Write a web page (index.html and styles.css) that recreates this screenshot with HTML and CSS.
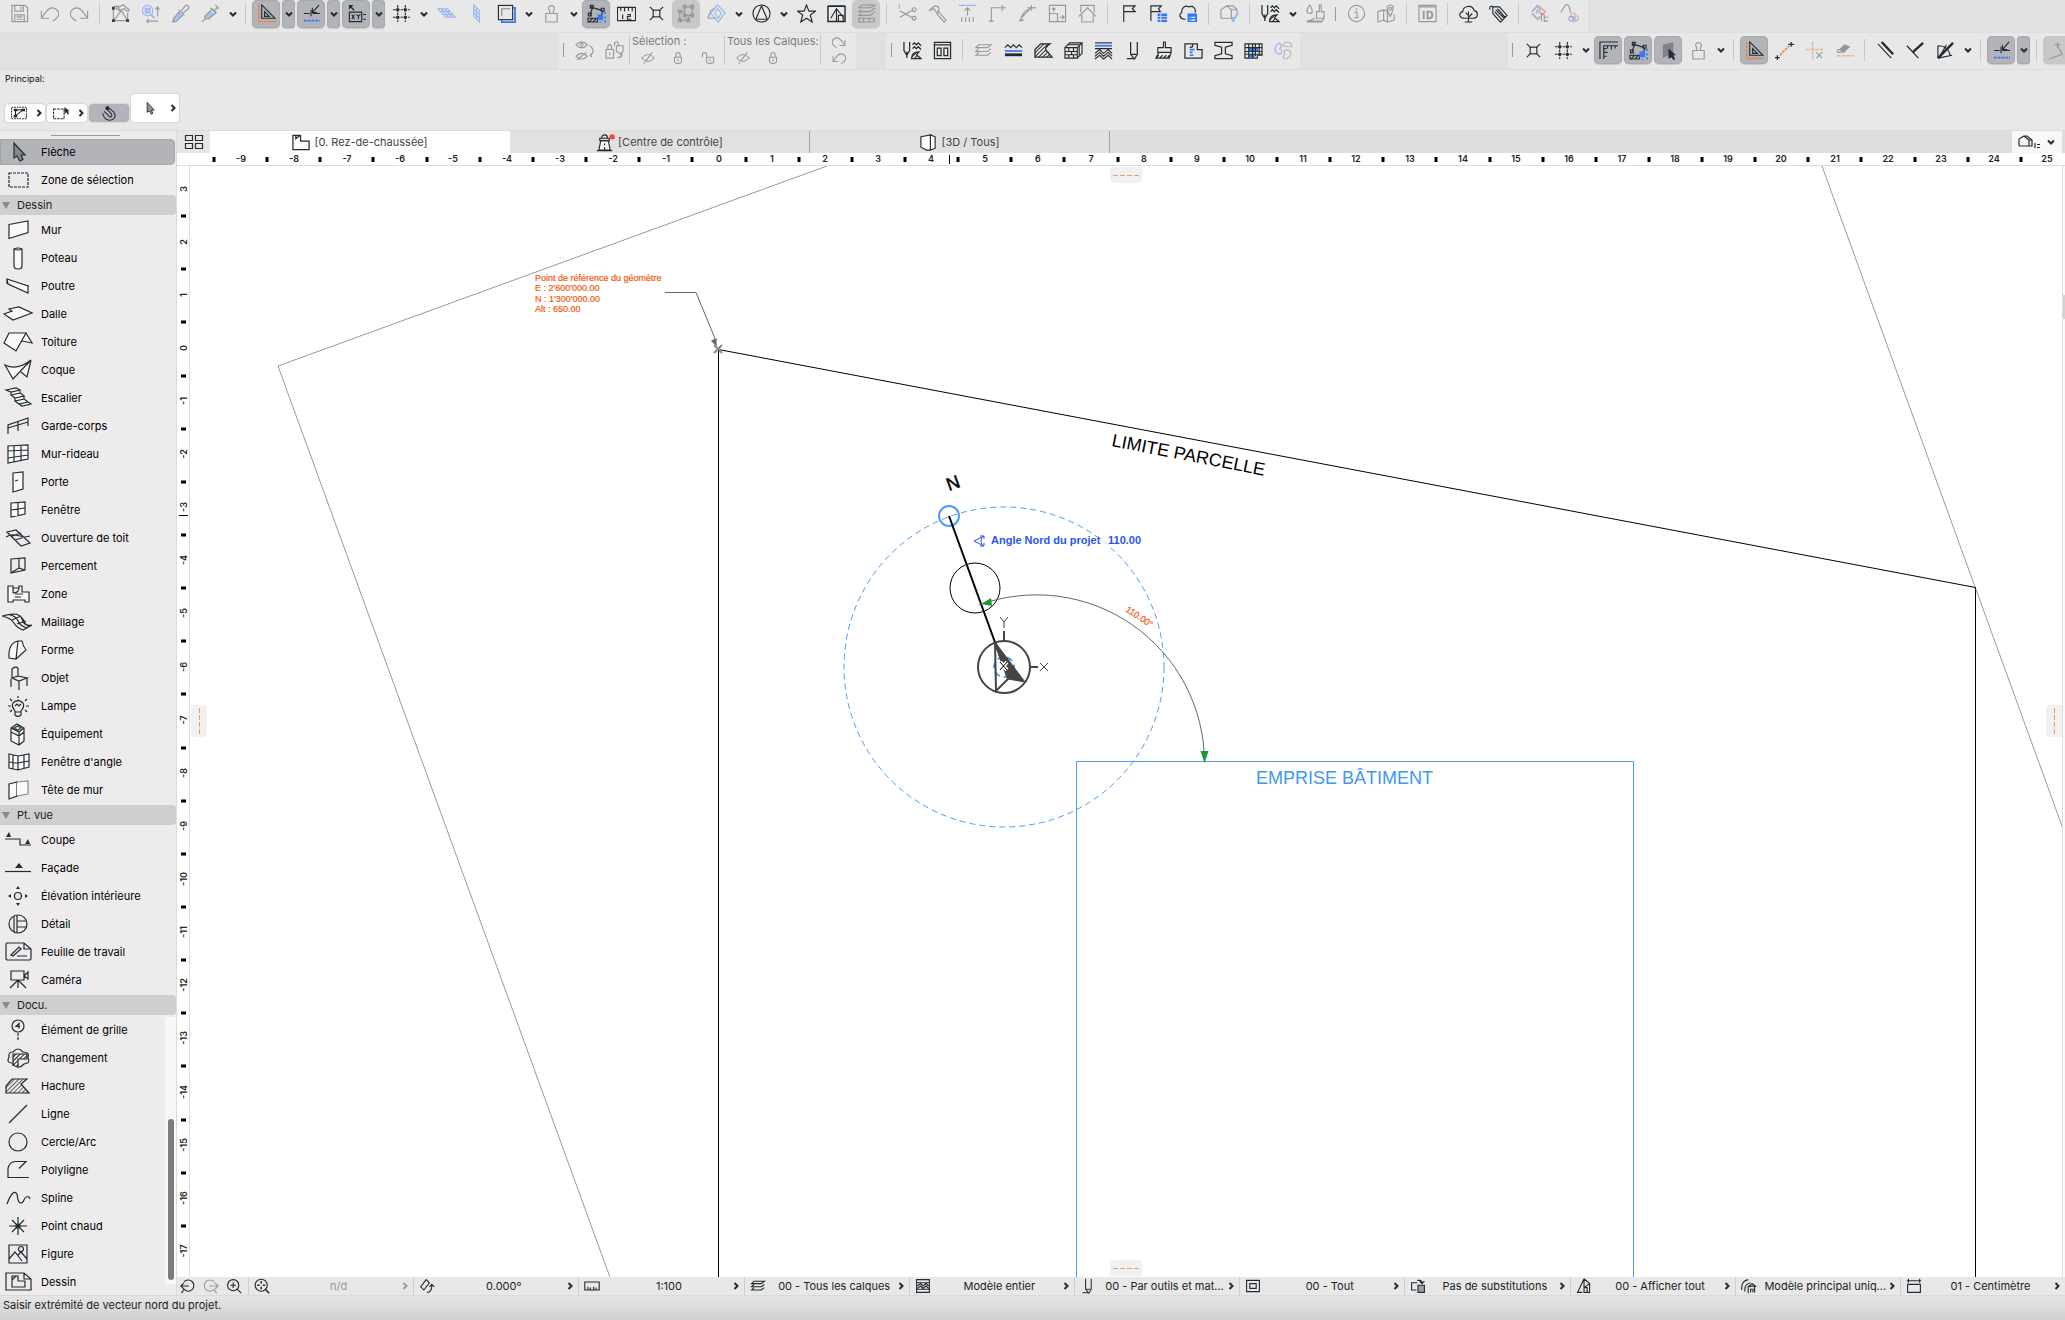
FILE: index.html
```html
<!DOCTYPE html>
<html lang="fr">
<head>
<meta charset="utf-8">
<title>Rez-de-chaussée</title>
<link rel="stylesheet" href="styles.css">
</head>
<body>
<svg class="defs" aria-hidden="true">
  <defs>
    <pattern id="hatch" width="3" height="3" patternUnits="userSpaceOnUse" patternTransform="rotate(45)"><path d="M0 0V3" stroke="#222c32" stroke-width="2"/></pattern>
    <symbol id="chev-d" viewBox="0 0 10 10"><path d="M2 3.500l3 3 3-3" stroke-width="2"/></symbol>
    <symbol id="chev-r" viewBox="0 0 10 10"><path d="M3.500 2l3 3-3 3" stroke-width="2"/></symbol>
    <symbol id="save" viewBox="0 0 20 20"><path d="M2 1.500h14l2.500 2.500v14.500h-16.500zM5 1.500v6h9v-6M11.500 3v3M5 18.500v-7h10v7M7 13.500h6M7 16h6"/></symbol>
    <symbol id="undo" viewBox="0 0 20 20"><path d="M1.500 7v8h8M1.500 15l5-7c4-5 9-5 12-1s0 8-5 11"/></symbol>
    <symbol id="redo" viewBox="0 0 20 20"><path d="M18.500 7v8h-8M18.500 15l-5-7c-4-5-9-5-12-1s0 8 5 11"/></symbol>
    <symbol id="transform" viewBox="0 0 20 20"><path d="M2.500 5v12.500h15v-8M3 17l8-10M3 2.500h4l-2 3M8 3l5-2 6 5-1 2-4-3-5 2zM11 7l6 10M5 4l4 3"/><path class="solid" d="M1 3h3v3h-3zM1 16h3v3h-3zM16 16h3v3h-3z"/></symbol>
    <symbol id="findsel" viewBox="0 0 20 20"><g class="blue"><circle cx="7" cy="7" r="5.500"/><path d="M11 11l3 4" stroke-width="2"/><path class="fillblue" d="M4.500 4.500h5v5h-5z"/></g><path d="M17.500 13V4M15 6l2.500-3 2 3M6 18h12M8 16l-2 2 2 2"/></symbol>
    <symbol id="pick" viewBox="0 0 20 20"><path class="fillblue blue" d="M3 15l6-6 3 3-6 6-4 1z"/><path d="M8 6l6 6M10 8l5-6c2-2 5 1 3 3l-6 5M9 8l-6 7-1 4 4-1 7-7"/></symbol>
    <symbol id="inject" viewBox="0 0 20 20"><path class="fillblue blue" d="M5 13l5-5 3 3-5 4z"/><path d="M1 19l4-4M4 13l8-8 4 4-8 7-4-1zM14 7l4-4M15 1l4 4M10 4l6 6"/></symbol>
    <symbol id="guide" viewBox="0 0 20 20"><path d="M5 1v14h14zM8 8v5h5z"/><path class="orange" d="M2 1v17M2 18.500h18" stroke-dasharray="3 1"/></symbol>
    <symbol id="snap" viewBox="0 0 20 20"><path d="M2 10h6M9.500 6v7M11 10h8M11 9l7-8M11 4v5h5"/><path class="bluebright" d="M2 17.500h17" stroke-dasharray="3 1"/></symbol>
    <symbol id="tracker" viewBox="0 0 20 20"><path d="M2.500 8.500h13v10h-13zM17 11h3M17 16h3M5 11l3 5M8 11l-3 5M10 11l2 2 2-2M12 13v3"/><path class="solid" d="M2 1h5l-2 2 3 3-1 1-3-3-2 2z"/></symbol>
    <symbol id="grid" viewBox="0 0 20 20"><path d="M6 1v18M14 1v18M1 6h18M1 14h18" stroke-dasharray="3 1"/><path class="solid" d="M4.500 4.500h3v3h-3zM12.500 4.500h3v3h-3zM4.500 12.500h3v3h-3zM12.500 12.500h3v3h-3z"/></symbol>
    <symbol id="plane-h" viewBox="0 0 20 20"><path class="blue" d="M1 5h10l8 9h-10zM4 8h10M6 11h11M4.500 5l8 9M8 5l8 9"/></symbol>
    <symbol id="plane-v" viewBox="0 0 20 20"><path class="blue" d="M7 1l6 6v12l-6-6zM10 4v12M7 5l6 6M7 9l6 6"/></symbol>
    <symbol id="layers2" viewBox="0 0 20 20"><path class="bluebright" d="M17 4h2v15h-14v-2"/><rect x="1.500" y="1.500" width="15" height="15"/><path d="M5 13v-8h9" stroke-opacity=".5"/></symbol>
    <symbol id="weight" viewBox="0 0 20 20"><path d="M4 10h12v9h-12zM8 10v-3c-5-7 9-7 4 0v3"/></symbol>
    <symbol id="suspend" viewBox="0 0 20 20"><path d="M4 3l12 4M3 11l3-7M17 7l-2 5M1.500 9.500h3v3h-3zM3.500 1.500h3v3h-3zM15 4.500h3v3h-3z"/><path d="M1 15h10v4h-10zM2 19l4-4M6 19l4-4"/><path class="fillbright" d="M11 11h6v6h-6z"/><path class="bluebright" d="M18 10l2-1M18 14h2M18 18l2 1M14 19v1"/></symbol>
    <symbol id="measure" viewBox="0 0 20 20"><path d="M0.500 3.500h19v14h-19zM4 4v3M8 4v4M12 4v3M16 4v4M6 11v5M11 11h3v2h-3v3h4"/></symbol>
    <symbol id="hot" viewBox="0 0 20 20"><rect x="6.500" y="6.500" width="7" height="7"/><path d="M3 3l4 4M17 3l-4 4M3 17l4-4M17 17l-4-4"/></symbol>
    <symbol id="group" viewBox="0 0 20 20"><path d="M8 3h8v9h-8zM3 8h5M3 8v9h9v-5M6.500 1.500h3v3h-3zM14.500 1.500h3v3h-3zM6.500 10.500h3v3h-3zM14.500 10.500h3v3h-3zM1.500 6.500h3v3h-3zM1.500 15.500h3v3h-3zM10.500 15.500h3v3h-3z"/></symbol>
    <symbol id="plane-e" viewBox="0 0 20 20"><path d="M1 15l3-8 5-3M1 15h9"/><path class="blue" d="M11 1l8 8-7 10-8-9zM11 5l4 4-3 6-4-5z"/></symbol>
    <symbol id="circtri" viewBox="0 0 20 20"><circle cx="10" cy="10" r="9"/><path d="M10 2l-6 14h12z"/></symbol>
    <symbol id="star" viewBox="0 0 20 20"><path d="M10 1l2.500 6.500h7l-5.500 4 2 7.500-6-4-6 4 2-7.500-5.500-4h7z"/></symbol>
    <symbol id="house-f" viewBox="0 0 20 20"><path d="M1 2.500h18v16h-18zM1 2h18" stroke-width="1.500"/><path d="M4 15l6-10 8 10M10 5v13M12 18v-6h5v6"/></symbol>
    <symbol id="stack" viewBox="0 0 20 20"><path d="M5 1h14l-5 3h-12zM19 4l-5 4h-12l2-2M19 8l-5 4h-12l2-2M2 15h16v4h-16zM7 15v4M13 15v4"/></symbol>
    <symbol id="scissors" viewBox="0 0 20 20"><path d="M2 7l14 8M2 14l14-8"/><circle cx="17" cy="6" r="2"/><circle cx="17" cy="15" r="2"/><path class="blue" d="M1.500 0v5"/></symbol>
    <symbol id="axe" viewBox="0 0 20 20"><path d="M1 7l6-5c5 0 6 4 3 8l-4-5zM10 7l9 10-2 2-8-9"/></symbol>
    <symbol id="adjust" viewBox="0 0 20 20"><path class="blue" d="M1 1.500h18"/><path d="M10 12v-8M7 7l3-3 3 3M4 14v5M8 14v5M12 14v5M16 14v5"/></symbol>
    <symbol id="inter" viewBox="0 0 20 20"><path d="M3.500 19v-15h12M15 1v6M12 4h7M1 18h5"/></symbol>
    <symbol id="fillet" viewBox="0 0 20 20"><path d="M3 19c0-8 5-14 14-15M14 1v6M10 4h9M1 17h5M3 15l9-9"/></symbol>
    <symbol id="resize" viewBox="0 0 20 20"><path d="M1.500 10v-8.500h17v17h-8.500M1.500 10h8.500v8.500h-8.500zM6 8v-4M4 6l2-2 2 2M12 14h5M15 12l2 2-2 2"/></symbol>
    <symbol id="explode" viewBox="0 0 20 20"><path d="M3 9v-7.500h14v7.500M1 13l9-9 9 9M4 11v8h12v-8"/></symbol>
    <symbol id="flag" viewBox="0 0 20 20"><path d="M5 19V2h12l-3 3 3 3H5"/></symbol>
    <symbol id="flagl" viewBox="0 0 20 20"><path d="M2 18V2h11l-3 3 2 3H2"/><path class="fillbright" d="M9 10h3v2.500h-3zM13 10h6v2.500h-6zM9 13.500h3v2h-3zM13 13.500h6v2h-6zM9 16.500h3v2.500h-3zM13 16.500h6v2.500h-6z"/></symbol>
    <symbol id="cloudl" viewBox="0 0 20 20"><path d="M7 16h-2c-5-1-5-6-2-7-1-5 4-8 7-6 5-2 8 2 7 6"/><path class="fillbright" d="M9 10h10v9h-10z"/><path d="M11 14h1M13 14h4M11 17h1M13 17h4" stroke="#fff"/></symbol>
    <symbol id="check3d" viewBox="0 0 20 20"><path d="M1 6l6-4 5 4v9h-11zM7 2l7 0 4 4v3M12 6h6M12 15l3-1"/><path class="blue" d="M12 15l2 3 5-9" stroke-width="2"/></symbol>
    <symbol id="brushset" viewBox="0 0 20 20"><path d="M1 1v9l3 5 3-5v-9M4 11v7M10 4l2-2 2 2 2-2 3 3M10 8l2-2 2 2 2-2 3 3" stroke-width="1.300"/><path d="M9 18.500c0-5 3-7 8-7l-3 3 5 4z" fill="url(#hatch)"/></symbol>
    <symbol id="paint" viewBox="0 0 20 20"><path d="M4 1c-5 7-3 9 0 9s4-3 0-9M14 1h2v7h3v7h-8v-7h3zM9 15c-2 1-4 3-8 3h16l2-3M1 19h16"/></symbol>
    <symbol id="info" viewBox="0 0 20 20"><circle cx="10" cy="10" r="8.500"/><path d="M8 8.500h2.500v6M7.500 14.500h5M10 4.500v2"/></symbol>
    <symbol id="map" viewBox="0 0 20 20"><path d="M1 8l6-2v11l-6 2zM7 6l4 2v11l-4-2M11 19l7-2v-6M14 13c-5-8-4-12 0-12s4 4 0 12z"/><circle cx="14" cy="5" r="1.500"/></symbol>
    <symbol id="idbox" viewBox="0 0 20 20"><path d="M1 1.500h18v17h-18zM1 3h18"/><path d="M6 7v9M10 8v7h2c4 0 4-7 0-7z" stroke-width="2"/></symbol>
    <symbol id="tree" viewBox="0 0 20 20"><path d="M10 19v-11M6 19h8M10 14l4-4M10 12l-3-3M10 15h-4c-6 0-7-6-2-7 0-6 10-8 12-1 5 1 4 8-1 8h-5"/></symbol>
    <symbol id="tag" viewBox="0 0 20 20"><path d="M4 3l7 0 8 9-7 7-8-9zM7 6l9 9M9 5l8 9M6 8l8 9M1 6c-1-4 2-5 4-2"/></symbol>
    <symbol id="knot" viewBox="0 0 20 20"><g stroke-width="2" opacity=".55"><path d="M2 8l6-6 3 3-5 5" stroke="#6874c8"/><path d="M9 2l7 6-3 3-6-5" stroke="#f07070"/><path d="M2 10l6 6 3-3" stroke="#b060b0"/><path d="M6 10l5-4" stroke="#68b8b8"/></g><path d="M12 9v9M12 11h3M15 11v8M15 14h4M15 18h4"/></symbol>
    <symbol id="knotc" viewBox="0 0 20 20"><path d="M1 9c5-10 7-10 9-5l1 5"/><g opacity=".6"><circle cx="14" cy="12" r="2.500" stroke="#f07070"/><circle cx="17" cy="15" r="2.500" stroke="#68b8b8"/><circle cx="12" cy="15.500" r="2.500" stroke="#6874c8"/><circle cx="15" cy="17" r="2" stroke="#f07070"/></g></symbol>
    <symbol id="eye2" viewBox="0 0 20 20"><path d="M1 4q6-6 12 0q-6 6-12 0zM1 16q6-6 12 0q-6 6-12 0zM2 20l10-8M15 5c5 2 5 8 1 10M18 13l-2 2 2 2"/><circle cx="7" cy="4" r="1.500"/></symbol>
    <symbol id="lock2" viewBox="0 0 20 20"><path d="M1 9h8v9h-8zM3 9v-3c0-3 4-3 4 0v3M5 12v3M12 5h7v6q-3 4-7 0zM10 5v-2c0-3 4-3 4 0v2M13 17c4 1 5-1 5-3M16 15l2-2"/></symbol>
    <symbol id="eyeoff" viewBox="0 0 20 20"><path d="M1 10q9-10 18 0q-9 10-18 0zM4 18L16 2"/></symbol>
    <symbol id="lock" viewBox="0 0 20 20"><path d="M5 9h10v7q-5 4-10 0zM7 9v-4c0-4 6-4 6 0v4M10 11v4"/></symbol>
    <symbol id="unlock" viewBox="0 0 20 20"><path d="M8 9h10v7q-5 4-10 0zM2 9v-4c0-4 6-4 6 0v4M13 11v4"/></symbol>
    <symbol id="window" viewBox="0 0 20 20"><path d="M1.500 1.500h17v17h-17zM1.500 4h17M4.500 7.500h4v8h-4zM11.500 7.500h4v8h-4z" stroke-width="1.300"/></symbol>
    <symbol id="sheets" viewBox="0 0 20 20"><path d="M5 4h13l-4 3h-12zM18 8l-4 3h-12l3-3M18 12l-4 3h-12l3-3"/></symbol>
    <symbol id="waves" viewBox="0 0 20 20"><path d="M1 7l3-3 3 3 3-3 3 3 3-3 3 3"/><path class="bluebright" d="M1 10.500h18" stroke-width="2"/><path d="M1 14.500h18" stroke-width="3"/></symbol>
    <symbol id="fill" viewBox="0 0 20 20"><path d="M1 17v-8l6-6h10c-6 4-5 6-4 7l6 7z" fill="url(#hatch)" stroke-width="1.300"/></symbol>
    <symbol id="bricks" viewBox="0 0 20 20"><path d="M1 7h13v11h-13zM1 7l5-5h13l-5 5M19 2v11l-5 5M1 11h13M1 14.500h13M5 7v4M10 7v4M8 11v3M5 14v4M10 14v4M16 5v10M4 4h13"/></symbol>
    <symbol id="compo" viewBox="0 0 20 20"><path d="M1 2h18"/><path class="bluebright" d="M1 5h18" stroke-width="2"/><path d="M1 8h18M1 13l5-4 4 4 5-4 4 4M1 16l5-4 4 4 5-4 4 4M1 19l5-4 4 4 5-4 4 4"/></symbol>
    <symbol id="pen" viewBox="0 0 20 20"><path d="M7 1v13l4 5 3-5v-13M11 18.500h-8M8 14h5" stroke-width="1.300"/></symbol>
    <symbol id="broom" viewBox="0 0 20 20"><path d="M10 7v-6h2v6h6v5h-14v-5h6M5 12l-3 6h14l2-6M2 18l3-3M6 18l3-3M10 18l3-3M14 18l2-3"/></symbol>
    <symbol id="zonecat" viewBox="0 0 20 20"><path d="M1 3h13v6h5v9h-18zM9 3v3l-3 1" stroke-width="1.300"/><path class="bluebright" d="M6 9h5M6 12h3M6 15h4"/></symbol>
    <symbol id="beam" viewBox="0 0 20 20"><path d="M1 1.500h18v3l-7 2v7l7 2v3h-18v-3l7-2v-7l-7-2z" stroke-width="1.300"/></symbol>
    <symbol id="sched" viewBox="0 0 20 20"><path d="M1 3h18v12h-5v3h-13z"/><path class="fillbright" d="M5 7h10v4h-10zM5 14h6v3h-6z"/><path d="M1 7h18M1 11h18M1 14h18M5 3v15M9 3v15M12 3v13M16 3v12"/></symbol>
    <symbol id="petals" viewBox="0 0 20 20"><path class="blue" d="M6 2c-6 3-7 10 0 12 3-2 3-4 0-6 2-2 2-4 0-6z"/><path d="M9 5c2-5 9-5 10 1h-6zM11 10c8-3 9 5 2 9-4 0-4-3-2-5z" stroke-opacity=".6"/></symbol>
    <symbol id="rulerc" viewBox="0 0 20 20"><path d="M1 19v-18h19M5 19v-14h15M5 8h3M5 12h4M5 16h3M9 5v3M13 5v4M17 5v3"/></symbol>
    <symbol id="face" viewBox="0 0 20 20"><path class="solid" d="M4 4l11-3v12l-11 5z" fill-opacity=".35"/><path class="solid" d="M10 8v11l3-2 2 3 2-1-2-4h3z"/></symbol>
    <symbol id="gline" viewBox="0 0 20 20"><path class="orange" d="M5 15L15 5" stroke-dasharray="3 1"/><path d="M2.500 15v5M0 17.500h5M17 1v5M14 3.500h6" stroke-width="1.300"/></symbol>
    <symbol id="gdel" viewBox="0 0 20 20"><path class="orange" opacity=".5" d="M8 1v18M1 9h18" stroke-dasharray="4 1"/><path d="M12 12l6 6M18 12l-6 6"/></symbol>
    <symbol id="erase" viewBox="0 0 20 20"><path class="fillgray" d="M5 9l5-5 5 2-6 6z"/><path d="M5 9l-2 0 0 3 4 0"/><path class="orange" opacity=".5" d="M2 15.500h18" stroke-dasharray="4 1"/></symbol>
    <symbol id="par" viewBox="0 0 20 20"><path d="M2 3l14 15"/><path d="M6 1l12 13" stroke-width="2.500"/></symbol>
    <symbol id="perp" viewBox="0 0 20 20"><path d="M1 5l12 13"/><path d="M7 12l11-10" stroke-width="2.500"/></symbol>
    <symbol id="bisect" viewBox="0 0 20 20"><path d="M2 18V5M2 18l15-3M2 5c8 0 12 4 13 11M3 18l8-14"/><path d="M2 18L18 2" stroke-width="2.500"/></symbol>
    <symbol id="angle" viewBox="0 0 20 20"><path d="M1 19l14-5-5-9M7 4h6M10 1v6"/></symbol>
    <symbol id="tabs" viewBox="0 0 20 16"><path d="M1.500 1.500h7v5h-7zM11.500 1.500h7v5h-7zM1.500 9.500h7v5h-7zM11.500 9.500h7v5h-7z"/></symbol>
    <symbol id="plan" viewBox="0 0 20 20"><path d="M1 2.500h8v6h9v9h-17zM4 3v3l4-3" fill="#fff" stroke-width="1.300"/></symbol>
    <symbol id="tower" viewBox="0 0 20 20"><path d="M5 8h8l2 10h-12z" fill="#f4f4f4"/><path d="M4 5.500h10v2.500h-10zM6 5c0-4 6-4 6 0M1 18.500h16M9 11v2M9 15v3"/><circle cx="17" cy="4" r="2.800" fill="#f8442c" stroke="none"/></symbol>
    <symbol id="cube" viewBox="0 0 20 20"><path d="M2 4l10-2v16l-4 0-6-3zM12 2l5 2v12l-5 2z" fill="#fff"/></symbol>
    <symbol id="view3" viewBox="0 0 22 16"><path d="M1 12V5l5-3 5 4v6H1M6 2h3l5 4v6h-3M11 6h3M17 9v5M19 10.500h3M19 13.500h3"/></symbol>
    <symbol id="selall" viewBox="0 0 20 16"><path d="M1.500 1.500h17v13h-17z" stroke-dasharray="2 1"/><path d="M6 5l8-1M6 5v7M6 11l8-6" /><path class="solid" d="M4 3h4v3h-4zM13 3h4v3h-4zM4 10h4v3h-4z"/></symbol>
    <symbol id="selrect" viewBox="0 0 20 16"><path d="M1.500 3.500h12v11h-12z" stroke-dasharray="3 1"/><path class="solid" d="M14 1v8l2-2 2 3 1-1-1-3h2z"/></symbol>
    <symbol id="magnet" viewBox="0 0 20 20"><path d="M7 5l6 6c2 3-1 5-3 3l-6-6M8 2l8 7c4 5 0 10-5 10s-8-4-9-9" stroke-width="1.300"/><circle class="solid" cx="8" cy="4" r="2.500"/></symbol>
    <symbol id="cursor" viewBox="0 0 20 20"><path d="M6 2v14l3-2 3 5 2-1-2-5h4z" fill="#92979b" stroke-width="1.300"/></symbol>

    <symbol id="t-arrow" viewBox="0 0 32 24"><path d="M12 3v15l3-2 3 5 3-1.500-2-4.500h4z" fill="#858a8f"/></symbol>
    <symbol id="t-marq" viewBox="0 0 32 24"><path d="M7 5h19v14h-19z" stroke-dasharray="3 1"/></symbol>
    <symbol id="t-wall" viewBox="0 0 32 24"><path d="M7 6.500l19-3.500v11.500l-19 6z" fill="#fafafa"/></symbol>
    <symbol id="t-col" viewBox="0 0 32 24"><path d="M12 3v17q0 3 4 3t4-3v-17q-4-2-8 0q4 2 8 0" fill="#fafafa"/></symbol>
    <symbol id="t-beam" viewBox="0 0 32 24"><path d="M5 5l21 7v7l-20-9zM5 5v5M26 12l1 0" fill="#fafafa"/></symbol>
    <symbol id="t-slab" viewBox="0 0 32 24"><path d="M2 12l8-3-3-2 10-2 13 6-19 7z" fill="#fafafa"/></symbol>
    <symbol id="t-roof" viewBox="0 0 32 24"><path d="M7 3h17l-10 18-12-8zM24 3l6 10-10-2" fill="#fafafa"/></symbol>
    <symbol id="t-shell" viewBox="0 0 32 24"><path d="M3 7q12 6 26-5l-18 19zM29 2l-4 17-6-5" fill="#fafafa"/></symbol>
    <symbol id="t-stair" viewBox="0 0 32 24"><path d="M4 4l10-2 4 2-9 2zM9 6v3l9-2v-3M9 9l4 3 9-2-4-3M13 12v3l9-2v-3M13 15l4 3 9-2-4-3M17 18l3 2 9-2-3-2" fill="#fafafa"/></symbol>
    <symbol id="t-rail" viewBox="0 0 32 24"><path d="M6 20v-9l20-7v8M6 14l20-6M16 7v10"/></symbol>
    <symbol id="t-curtain" viewBox="0 0 32 24"><path d="M6 4l20-1v14l-20 4zM12 4v16M19 3v15M6 9l20-1M6 16l20-3" fill="#fafafa"/></symbol>
    <symbol id="t-door" viewBox="0 0 32 24"><path d="M11 3l10-1v17l-10 3zM13 11l3-1" fill="#fafafa"/></symbol>
    <symbol id="t-win" viewBox="0 0 32 24"><path d="M9 5l14-1v12l-14 3zM16 5v13M9 12l14-2" fill="#fafafa"/></symbol>
    <symbol id="t-sky" viewBox="0 0 32 24"><path d="M5 6l9-2 14 13-9 3zM4 11q5-3 9-2l10 2 5-1M10 10l9-3M13 14l10-3"/></symbol>
    <symbol id="t-open" viewBox="0 0 32 24"><path d="M9 5l14-1v12l-14 3zM17 4v10l6 2M17 14l-8 5"/></symbol>
    <symbol id="t-zone" viewBox="0 0 32 24"><path d="M6 4h5v2h6v-2h3v6h7v10h-4v-2h-12v2h-5zM11 6v5q6 0 6-5M13 12h8M13 15h6" fill="#fafafa"/></symbol>
    <symbol id="t-mesh" viewBox="0 0 32 24"><path d="M0 6q18-5 20 3t10 6l-9 5q-6-2-9-7t-12-7zM8 5q6 1 8 6t9 7M14 4q6 2 8 7t5 5M10 10l9-4M15 14l9-3"/></symbol>
    <symbol id="t-morph" viewBox="0 0 32 24"><path d="M7 20q-1-15 9-17l-2 18zM16 3h4q1 5 4 9l-10 9" fill="#fafafa"/></symbol>
    <symbol id="t-chair" viewBox="0 0 32 24"><path d="M10 12v-9q3-3 6-1v8l-6 2 7 3 8-3-9-2M9 13v8M17 15v9M25 12v8"/></symbol>
    <symbol id="t-lamp" viewBox="0 0 32 24"><path d="M13 17q-4-5-2-8 5-5 10 0 2 3-2 8v4q-3 3-6 0zM13 18h6M13 12l2-2 2 2 2-2M6 12h3M24 12h3M8 5l2 2M25 5l-2 2M8 18l2-2M25 18l-2-2M16 2v2"/></symbol>
    <symbol id="t-equip" viewBox="0 0 32 24"><path d="M9 6l6-4 7 4v13l-5 4-8-4zM9 6l8 4 5-4M17 10v13M9 10l8 4 5-4M12 6l4-2 3 2-3 2z" fill="#fafafa"/></symbol>
    <symbol id="t-corner" viewBox="0 0 32 24"><path d="M7 4l9 2 11-2v13l-11 3-9-2zM16 6v14M11 5v14M22 5v13M7 12l9 1 11-2" fill="#fafafa"/></symbol>
    <symbol id="t-end" viewBox="0 0 32 24"><path d="M7 6l8-2v14l-8 3z" fill="#fafafa"/><path d="M15 4l11-1v13l-11 2" fill="#fafafa" stroke-opacity=".5"/></symbol>
    <symbol id="t-section" viewBox="0 0 32 24"><path d="M3 11h15v6h11M18 13v3"/><path class="solid" d="M4 9l3-5 2 5zM23 16l3-5 2 5z"/></symbol>
    <symbol id="t-facade" viewBox="0 0 32 24"><path d="M3 15.500h26"/><path class="solid" d="M13 12l4-5 4 5z"/></symbol>
    <symbol id="t-inter" viewBox="0 0 32 24"><circle cx="16" cy="12" r="3.500"/><path class="solid" d="M14 5l2-3 2 3zM14 19l2 3 2-3zM9 10l-3 2 3 2zM23 10l3 2-3 2z"/></symbol>
    <symbol id="t-detail" viewBox="0 0 32 24"><circle cx="16" cy="12" r="9"/><path d="M12 4v16M15 3v18M15 9h9M15 15h9"/></symbol>
    <symbol id="t-sheet" viewBox="0 0 32 24"><path d="M5 3h17l7 6v10l-1 1h-23l-1-1v-15zM22 3v6h7M9 15l8-8 2 2-8 7zM15 16h10"/></symbol>
    <symbol id="t-cam" viewBox="0 0 32 24"><path d="M9 3h13v9h-13zM22 8l4-4v7zM16 12v8M16 12l-8 8M16 12l8 8"/></symbol>
    <symbol id="t-gridel" viewBox="0 0 32 24"><circle cx="16" cy="8" r="6"/><path d="M17 10.500v-5l-3 3h4"/><path d="M16 15v8" stroke-dasharray="3 1"/></symbol>
    <symbol id="t-change" viewBox="0 0 32 24"><path d="M10 17q-6 0-3-6-1-5 4-5 5-6 10 0 7 0 5 6 3 5-4 6-6 7-12-1z"/><path d="M11 20v-12h14v5h-9v8" fill="url(#hatch)"/></symbol>
    <symbol id="t-fill" viewBox="0 0 32 24"><path d="M4 19v-7l6-7h15l-6 5 8 9z" fill="url(#hatch)" fill-opacity=".7"/></symbol>
    <symbol id="t-line" viewBox="0 0 32 24"><path d="M7 21L25 3"/></symbol>
    <symbol id="t-circ" viewBox="0 0 32 24"><circle cx="16" cy="12" r="9"/></symbol>
    <symbol id="t-poly" viewBox="0 0 32 24"><path d="M27 19.500h-21v-9q1-6 7-7h11l-7 7"/></symbol>
    <symbol id="t-spline" viewBox="0 0 32 24"><path d="M5 18q6-16 10-10c1 3 0 9 4 9s2-8 8-6l1 2"/></symbol>
    <symbol id="t-hot" viewBox="0 0 32 24"><circle cx="16" cy="12" r="2"/><path d="M16 3v18M7 12h18M10 6l12 12M22 6l-12 12"/></symbol>
    <symbol id="t-fig" viewBox="0 0 32 24"><path d="M7 3h18v18h-18zM7 17l6-7 7 9M16 13l3-3 6 7"/><circle cx="19" cy="7" r="2.500"/></symbol>
    <symbol id="t-draw" viewBox="0 0 32 24"><path d="M5 3h17l7 6v11h-25v-17zM22 3v6h7M10 6h6v5h7v6h-13zM10 10l4-4"/></symbol>

    <symbol id="navback" viewBox="0 0 20 20"><path d="M5 5a7 7 0 1 1 0 9M1 10h10M5 6l-4 4 4 4M5 14l-3 5"/></symbol>
    <symbol id="navfwd" viewBox="0 0 20 20"><path d="M14 5a7 7 0 1 0 0 9M8 10h11M15 6l4 4-4 4M14 15l3 4"/></symbol>
    <symbol id="zoomin" viewBox="0 0 20 20"><circle cx="9" cy="9" r="7"/><path d="M14 14l5 5M5.500 9h7M9 5.500v7"/></symbol>
    <symbol id="zoomfit" viewBox="0 0 20 20"><circle cx="9" cy="9" r="7.500"/><path d="M14 14l5 5M9 4v3M9 11v3M4 9h3M11 9h3" stroke-width="2"/></symbol>
    <symbol id="b-rot" viewBox="0 0 20 20"><path d="M2 11l7-9 4 4-7 9zM10 18c5 0 6-4 6-9M13 11l3-3 3 3"/></symbol>
    <symbol id="b-scale" viewBox="0 0 20 20"><path d="M1 5h18v10h-18zM5 15v-4M8 15v-3M12 15v-4M15 15v-3"/></symbol>
    <symbol id="b-fill" viewBox="0 0 20 20"><path d="M2 2h16v16h-16zM2 6h16M2 14h16M3 10l4-3 3 3 4-3 3 3M3 13l4-3 3 3 4-3 3 3"/></symbol>
    <symbol id="b-frame" viewBox="0 0 20 20"><path d="M2 3h16v14h-16zM6 7h8v6h-8z"/></symbol>
    <symbol id="b-sub" viewBox="0 0 20 20"><path d="M9 6h-7v9h6M9 3h3q3 0 3 4M12 4l3 3 3-3"/><path d="M10 9h8v9h-8z" fill="#9aa0a5"/></symbol>
    <symbol id="b-reno" viewBox="0 0 20 20"><path d="M10 1l-8 17h6M10 1v11l7-5M10 1l7 6v11h-7v-6h4v6"/></symbol>
    <symbol id="b-model" viewBox="0 0 20 20"><path d="M1 15c-1-8 3-12 8-13M5 17c-1-7 2-10 7-11M9 19v-8l8-1v8M12 18v-4h3v4M9 11l5-4 5 4"/></symbol>
    <symbol id="b-dim" viewBox="0 0 20 20"><path d="M2 8h16v10h-16zM1 3.500h18M3 1v5M17 1v5"/></symbol>
  </defs>
</svg>

<div class="app">
  <div class="bar bar-top" role="toolbar" aria-label="Standard">
    <div class="seg">
      <button class="tb dim" aria-label="Enregistrer"><svg><use href="#save"/></svg></button>
      <button class="tb dim" aria-label="Annuler"><svg><use href="#undo"/></svg></button>
      <button class="tb dim" aria-label="Rétablir"><svg><use href="#redo"/></svg></button>
      <span class="sep"></span>
      <button class="tb dim" aria-label="Transformer"><svg><use href="#transform"/></svg></button>
      <button class="tb dim" aria-label="Rechercher"><svg><use href="#findsel"/></svg></button>
      <button class="tb dim" aria-label="Prélever"><svg><use href="#pick"/></svg></button>
      <button class="tb dim" aria-label="Injecter"><svg><use href="#inject"/></svg></button>
      <button class="tc" aria-label="Options"><svg><use href="#chev-d"/></svg></button>
      <span class="sep"></span>
      <button class="tb on" aria-label="Lignes guides"><svg><use href="#guide"/></svg></button>
      <button class="tc on" aria-label="Options"><svg><use href="#chev-d"/></svg></button>
      <button class="tb on" aria-label="Accrochage"><svg><use href="#snap"/></svg></button>
      <button class="tc on" aria-label="Options"><svg><use href="#chev-d"/></svg></button>
      <button class="tb on" aria-label="Palette suiveuse"><svg><use href="#tracker"/></svg></button>
      <button class="tc on" aria-label="Options"><svg><use href="#chev-d"/></svg></button>
      <button class="tb" aria-label="Grille"><svg><use href="#grid"/></svg></button>
      <button class="tc" aria-label="Options"><svg><use href="#chev-d"/></svg></button>
      <button class="tb dim" aria-label="Plan horizontal"><svg><use href="#plane-h"/></svg></button>
      <button class="tb dim" aria-label="Plan vertical"><svg><use href="#plane-v"/></svg></button>
      <button class="tb" aria-label="Référence"><svg><use href="#layers2"/></svg></button>
      <button class="tc" aria-label="Options"><svg><use href="#chev-d"/></svg></button>
      <button class="tb dim" aria-label="Gravité"><svg><use href="#weight"/></svg></button>
      <button class="tc" aria-label="Options"><svg><use href="#chev-d"/></svg></button>
      <button class="tb on" aria-label="Suspendre"><svg><use href="#suspend"/></svg></button>
      <button class="tb" aria-label="Mesurer"><svg><use href="#measure"/></svg></button>
      <button class="tb" aria-label="Point spécial"><svg><use href="#hot"/></svg></button>
      <button class="tb off" aria-label="Grouper"><svg><use href="#group"/></svg></button>
      <button class="tb dim" aria-label="Plan d'édition"><svg><use href="#plane-e"/></svg></button>
      <button class="tc" aria-label="Options"><svg><use href="#chev-d"/></svg></button>
      <button class="tb" aria-label="Géométrie"><svg><use href="#circtri"/></svg></button>
      <button class="tc" aria-label="Options"><svg><use href="#chev-d"/></svg></button>
      <button class="tb" aria-label="Favoris"><svg><use href="#star"/></svg></button>
      <button class="tb" aria-label="Rénovation"><svg><use href="#house-f"/></svg></button>
      <button class="tb off" aria-label="Calques"><svg><use href="#stack"/></svg></button>
      <span class="sep"></span>
      <button class="tb dim" aria-label="Couper"><svg><use href="#scissors"/></svg></button>
      <button class="tb dim" aria-label="Scinder"><svg><use href="#axe"/></svg></button>
      <button class="tb dim" aria-label="Ajuster"><svg><use href="#adjust"/></svg></button>
      <button class="tb dim" aria-label="Intersection"><svg><use href="#inter"/></svg></button>
      <button class="tb dim" aria-label="Congé"><svg><use href="#fillet"/></svg></button>
      <button class="tb dim" aria-label="Redimensionner"><svg><use href="#resize"/></svg></button>
      <button class="tb dim" aria-label="Décomposer"><svg><use href="#explode"/></svg></button>
      <span class="sep"></span>
      <button class="tb" aria-label="Drapeau"><svg><use href="#flag"/></svg></button>
      <button class="tb" aria-label="Liste"><svg><use href="#flagl"/></svg></button>
      <button class="tb" aria-label="Nuage"><svg><use href="#cloudl"/></svg></button>
      <span class="sep"></span>
      <button class="tb dim" aria-label="Vérifier"><svg><use href="#check3d"/></svg></button>
      <span class="sep"></span>
      <button class="tb" aria-label="Attributs"><svg><use href="#brushset"/></svg></button>
      <button class="tc" aria-label="Options"><svg><use href="#chev-d"/></svg></button>
      <button class="tb dim" aria-label="Peindre"><svg><use href="#paint"/></svg></button>
      <span class="sep short"></span>
      <button class="tb dim" aria-label="Infos"><svg><use href="#info"/></svg></button>
      <button class="tb dim" aria-label="Carte"><svg><use href="#map"/></svg></button>
      <span class="sep"></span>
      <button class="tb dim" aria-label="Identifiant"><svg><use href="#idbox"/></svg></button>
      <span class="sep"></span>
      <button class="tb" aria-label="Arbre"><svg><use href="#tree"/></svg></button>
      <button class="tb" aria-label="Étiquette"><svg><use href="#tag"/></svg></button>
      <span class="sep"></span>
      <button class="tb dim" aria-label="Lien"><svg><use href="#knot"/></svg></button>
      <button class="tb dim" aria-label="Courbe"><svg><use href="#knotc"/></svg></button>
    </div>
  </div>

  <div class="bar bar-second">
    <div class="seg" role="toolbar" aria-label="Calques">
      <span class="grip"></span>
      <button class="tb dim" aria-label="Inverser la visibilité"><svg><use href="#eye2"/></svg></button>
      <button class="tb dim" aria-label="Inverser le verrouillage"><svg><use href="#lock2"/></svg></button>
      <div class="lay">
        <span class="lay-t">Sélection :</span>
        <div class="lay-r">
          <button class="sm" aria-label="Masquer"><svg><use href="#eyeoff"/></svg></button>
          <button class="sm" aria-label="Verrouiller"><svg><use href="#lock"/></svg></button>
          <button class="sm" aria-label="Déverrouiller"><svg><use href="#unlock"/></svg></button>
        </div>
      </div>
      <div class="lay">
        <span class="lay-t">Tous les Calques:</span>
        <div class="lay-r">
          <button class="sm" aria-label="Masquer tout"><svg><use href="#eyeoff"/></svg></button>
          <button class="sm" aria-label="Verrouiller tout"><svg><use href="#lock"/></svg></button>
        </div>
      </div>
      <div class="lay lay-h">
        <button class="sm" aria-label="Rétablir calques"><svg><use href="#redo"/></svg></button>
        <button class="sm" aria-label="Annuler calques"><svg><use href="#undo"/></svg></button>
      </div>
    </div>
    <div class="seg seg-attr" role="toolbar" aria-label="Attributs">
      <span class="grip"></span>
      <button class="tb" aria-label="Attributs"><svg><use href="#brushset"/></svg></button>
      <button class="tb" aria-label="Options"><svg><use href="#window"/></svg></button>
      <span class="sep"></span>
      <button class="tb dim" aria-label="Calques"><svg><use href="#sheets"/></svg></button>
      <button class="tb" aria-label="Types de lignes"><svg><use href="#waves"/></svg></button>
      <button class="tb" aria-label="Types de hachures"><svg><use href="#fill"/></svg></button>
      <button class="tb" aria-label="Matériaux"><svg><use href="#bricks"/></svg></button>
      <button class="tb" aria-label="Composites"><svg><use href="#compo"/></svg></button>
      <button class="tb" aria-label="Stylos"><svg><use href="#pen"/></svg></button>
      <button class="tb" aria-label="Surfaces"><svg><use href="#broom"/></svg></button>
      <button class="tb" aria-label="Catégories de zone"><svg><use href="#zonecat"/></svg></button>
      <button class="tb" aria-label="Profils"><svg><use href="#beam"/></svg></button>
      <button class="tb" aria-label="Profils d'utilisation"><svg><use href="#sched"/></svg></button>
      <button class="tb dim" aria-label="Villes"><svg><use href="#petals"/></svg></button>
    </div>
    <div class="seg seg-snap" role="toolbar" aria-label="Aides au dessin">
      <span class="grip"></span>
      <button class="tb" aria-label="Origine"><svg><use href="#hot"/></svg></button>
      <button class="tb" aria-label="Grille"><svg><use href="#grid"/></svg></button>
      <button class="tc" aria-label="Options"><svg><use href="#chev-d"/></svg></button>
      <button class="tb on" aria-label="Règles"><svg><use href="#rulerc"/></svg></button>
      <button class="tb on" aria-label="Suspendre"><svg><use href="#suspend"/></svg></button>
      <button class="tb on" aria-label="Surface"><svg><use href="#face"/></svg></button>
      <button class="tb dim" aria-label="Gravité"><svg><use href="#weight"/></svg></button>
      <button class="tc" aria-label="Options"><svg><use href="#chev-d"/></svg></button>
      <span class="sep"></span>
      <button class="tb on" aria-label="Lignes guides"><svg><use href="#guide"/></svg></button>
      <button class="tb" aria-label="Segment guide"><svg><use href="#gline"/></svg></button>
      <button class="tb dim" aria-label="Supprimer guide"><svg><use href="#gdel"/></svg></button>
      <button class="tb dim" aria-label="Effacer guides"><svg><use href="#erase"/></svg></button>
      <span class="sep"></span>
      <button class="tb" aria-label="Parallèle"><svg><use href="#par"/></svg></button>
      <button class="tb" aria-label="Perpendiculaire"><svg><use href="#perp"/></svg></button>
      <button class="tb" aria-label="Bissectrice"><svg><use href="#bisect"/></svg></button>
      <button class="tc" aria-label="Options"><svg><use href="#chev-d"/></svg></button>
      <span class="sep"></span>
      <button class="tb on" aria-label="Accrochage"><svg><use href="#snap"/></svg></button>
      <button class="tc on" aria-label="Options"><svg><use href="#chev-d"/></svg></button>
      <span class="sep"></span>
      <button class="tb off" aria-label="Angle"><svg><use href="#angle"/></svg></button>
    </div>
  </div>

  <div class="infobox">
    <span class="info-t">Principal:</span>
    <div class="info-r">
      <button class="ib" aria-label="Sélection partielle"><svg class="ib-i"><use href="#selall"/></svg><svg class="cv"><use href="#chev-r"/></svg></button>
      <button class="ib" aria-label="Sélection rectangle"><svg class="ib-i"><use href="#selrect"/></svg><svg class="cv"><use href="#chev-r"/></svg></button>
      <button class="ib ib-on" aria-label="Aimant"><svg class="ib-i"><use href="#magnet"/></svg></button>
      <button class="ib ib-big" aria-label="Flèche"><svg class="ib-i"><use href="#cursor"/></svg><svg class="cv"><use href="#chev-r"/></svg></button>
    </div>
  </div>

  <div class="main">
    <nav class="tools" aria-label="Outils">
      <span class="pull"></span>
      <button class="tool sel"><svg><use href="#t-arrow"/></svg>Flèche</button>
      <button class="tool"><svg><use href="#t-marq"/></svg>Zone de sélection</button>
      <button class="head">Dessin</button>
      <button class="tool"><svg><use href="#t-wall"/></svg>Mur</button>
      <button class="tool"><svg><use href="#t-col"/></svg>Poteau</button>
      <button class="tool"><svg><use href="#t-beam"/></svg>Poutre</button>
      <button class="tool"><svg><use href="#t-slab"/></svg>Dalle</button>
      <button class="tool"><svg><use href="#t-roof"/></svg>Toiture</button>
      <button class="tool"><svg><use href="#t-shell"/></svg>Coque</button>
      <button class="tool"><svg><use href="#t-stair"/></svg>Escalier</button>
      <button class="tool"><svg><use href="#t-rail"/></svg>Garde-corps</button>
      <button class="tool"><svg><use href="#t-curtain"/></svg>Mur-rideau</button>
      <button class="tool"><svg><use href="#t-door"/></svg>Porte</button>
      <button class="tool"><svg><use href="#t-win"/></svg>Fenêtre</button>
      <button class="tool"><svg><use href="#t-sky"/></svg>Ouverture de toit</button>
      <button class="tool"><svg><use href="#t-open"/></svg>Percement</button>
      <button class="tool"><svg><use href="#t-zone"/></svg>Zone</button>
      <button class="tool"><svg><use href="#t-mesh"/></svg>Maillage</button>
      <button class="tool"><svg><use href="#t-morph"/></svg>Forme</button>
      <button class="tool"><svg><use href="#t-chair"/></svg>Objet</button>
      <button class="tool"><svg><use href="#t-lamp"/></svg>Lampe</button>
      <button class="tool"><svg><use href="#t-equip"/></svg>Équipement</button>
      <button class="tool"><svg><use href="#t-corner"/></svg>Fenêtre d'angle</button>
      <button class="tool"><svg><use href="#t-end"/></svg>Tête de mur</button>
      <button class="head">Pt. vue</button>
      <button class="tool"><svg><use href="#t-section"/></svg>Coupe</button>
      <button class="tool"><svg><use href="#t-facade"/></svg>Façade</button>
      <button class="tool"><svg><use href="#t-inter"/></svg>Élévation intérieure</button>
      <button class="tool"><svg><use href="#t-detail"/></svg>Détail</button>
      <button class="tool"><svg><use href="#t-sheet"/></svg>Feuille de travail</button>
      <button class="tool"><svg><use href="#t-cam"/></svg>Caméra</button>
      <button class="head">Docu.</button>
      <div class="docu">
        <div class="docu-l">
          <button class="tool"><svg><use href="#t-gridel"/></svg>Élément de grille</button>
          <button class="tool"><svg><use href="#t-change"/></svg>Changement</button>
          <button class="tool"><svg><use href="#t-fill"/></svg>Hachure</button>
          <button class="tool"><svg><use href="#t-line"/></svg>Ligne</button>
          <button class="tool"><svg><use href="#t-circ"/></svg>Cercle/Arc</button>
          <button class="tool"><svg><use href="#t-poly"/></svg>Polyligne</button>
          <button class="tool"><svg><use href="#t-spline"/></svg>Spline</button>
          <button class="tool"><svg><use href="#t-hot"/></svg>Point chaud</button>
          <button class="tool"><svg><use href="#t-fig"/></svg>Figure</button>
          <button class="tool"><svg><use href="#t-draw"/></svg>Dessin</button>
        </div>
        <div class="track"><div class="thumb"></div></div>
      </div>
    </nav>

    <div class="work">
      <div class="tabbar">
        <button class="tabgrid" aria-label="Aperçu des onglets"><svg><use href="#tabs"/></svg></button>
        <div class="tabs" role="tablist">
          <button class="tab cur" role="tab" aria-selected="true"><svg><use href="#plan"/></svg>[0. Rez-de-chaussée]</button>
          <button class="tab" role="tab"><svg><use href="#tower"/></svg>[Centre de contrôle]</button>
          <button class="tab" role="tab"><svg><use href="#cube"/></svg>[3D / Tous]</button>
        </div>
        <button class="tabview" aria-label="Vues"><svg class="vi"><use href="#view3"/></svg><svg class="cv"><use href="#chev-d"/></svg></button>
      </div>

      <svg class="ruler-h" role="img" aria-label="Règle horizontale">
        <g transform="translate(-177 0)">
          <path class="tick" d="M214 4v5M267 4v5M320 4v5M373 4v5M427 4v5M480 4v5M533 4v5M586 4v5M639 4v5M692 4v5M746 4v5M799 4v5M852 4v5M905 4v5M958 4v5M1011 4v5M1064 4v5M1118 4v5M1171 4v5M1224 4v5M1277 4v5M1330 4v5M1383 4v5M1436 4v5M1490 4v5M1543 4v5M1596 4v5M1649 4v5M1702 4v5M1755 4v5M1808 4v5M1861 4v5M1915 4v5M1968 4v5M2021 4v5"/>
          <path class="now" d="M949 2h1v9h-1z"/>
          <text x="241" y="9">-9</text><text x="294" y="9">-8</text><text x="347" y="9">-7</text><text x="400" y="9">-6</text><text x="453" y="9">-5</text><text x="507" y="9">-4</text><text x="560" y="9">-3</text><text x="613" y="9">-2</text><text x="666" y="9">-1</text><text x="719" y="9">0</text><text x="772" y="9">1</text><text x="825" y="9">2</text><text x="878" y="9">3</text><text x="931" y="9">4</text><text x="985" y="9">5</text><text x="1038" y="9">6</text><text x="1091" y="9">7</text><text x="1144" y="9">8</text><text x="1197" y="9">9</text><text x="1250" y="9">10</text><text x="1303" y="9">11</text><text x="1356" y="9">12</text><text x="1410" y="9">13</text><text x="1463" y="9">14</text><text x="1516" y="9">15</text><text x="1569" y="9">16</text><text x="1622" y="9">17</text><text x="1675" y="9">18</text><text x="1728" y="9">19</text><text x="1781" y="9">20</text><text x="1835" y="9">21</text><text x="1888" y="9">22</text><text x="1941" y="9">23</text><text x="1994" y="9">24</text><text x="2047" y="9">25</text>
        </g>
      </svg>

      <div class="view">
        <svg class="ruler-v" role="img" aria-label="Règle verticale">
          <g transform="translate(0 -166)">
            <path class="tick" d="M4 216h5M4 269h5M4 322h5M4 376h5M4 429h5M4 482h5M4 535h5M4 588h5M4 641h5M4 694h5M4 748h5M4 801h5M4 854h5M4 907h5M4 960h5M4 1013h5M4 1066h5M4 1120h5M4 1173h5M4 1226h5"/>
            <path class="now" d="M2 515h9v1h-9z"/>
          </g>
          <g transform="translate(0 -166) rotate(-90)">
            <text x="-189" y="10">3</text><text x="-242" y="10">2</text><text x="-295" y="10">1</text><text x="-348" y="10">0</text><text x="-401" y="10">-1</text><text x="-454" y="10">-2</text><text x="-507" y="10">-3</text><text x="-560" y="10">-4</text><text x="-613" y="10">-5</text><text x="-667" y="10">-6</text><text x="-720" y="10">-7</text><text x="-773" y="10">-8</text><text x="-826" y="10">-9</text><text x="-879" y="10">-10</text><text x="-932" y="10">-11</text><text x="-985" y="10">-12</text><text x="-1038" y="10">-13</text><text x="-1092" y="10">-14</text><text x="-1145" y="10">-15</text><text x="-1198" y="10">-16</text><text x="-1251" y="10">-17</text>
          </g>
        </svg>
        <div class="canvas">
          <svg class="plan" role="img" aria-label="Plan du rez-de-chaussée">
            <g transform="translate(-190 -166)">
              <path class="faint" d="M827 166L278 366L611 1280M1822 166L2066 837"/>
              <path class="ink" d="M718.500 1280V349.500L1975.500 587.500V1280"/>
              <path class="azure" d="M1076.500 1280V761.500H1633.500V1280"/>
              <path class="leader" d="M665 292.500h31l19 46"/><path class="arrow" d="M716 345l-4-4 4-2z"/><path class="leader2" d="M714 345l8 8M722 345l-8 8"/>
              <g class="survey"><text x="535" y="281">Point de référence du géomètre</text><text x="535" y="291">E : 2'600'000.00</text><text x="535" y="302">N : 1'300'000.00</text><text x="535" y="312">Alt : 650.00</text></g>
              <text class="big" transform="translate(1111 446) rotate(11)">LIMITE PARCELLE</text>
              <text class="big bluet" x="1256" y="784">EMPRISE BÂTIMENT</text>
              <circle class="dash" cx="1004" cy="667" r="160"/>
              <circle class="node" cx="949" cy="516" r="10"/>
              <circle class="dash inner" cx="1004" cy="667" r="10"/>
              <text class="big north" transform="translate(949 491) rotate(-20)">N</text>
              <circle class="ink" cx="975" cy="588" r="25"/>
              <path class="ink vec" d="M949 516L1004 667"/>
              <path class="arc" d="M979 605A168 168 0 0 1 1204.500 762"/>
              <path class="green" d="M981 604l10-6 1 8zM1204.500 763l-4-12h8z"/>
              <text class="deg" transform="translate(1125 611) rotate(33)">110.00°</text>
              <g class="compass"><circle cx="1004" cy="667" r="26"/><path d="M1004 631v10M1030 667h8"/><path d="M995 643l1 48 12-12z"/><path class="needle" d="M995 642l30 40-17-3z"/></g>
              <path class="halo" d="M1000 662l7 8M1007 662l-7 8"/><path class="ink" d="M1000 662l7 8M1007 662l-7 8"/>
              <path class="axis" d="M1000 617l4 5 4-5M1004 622v6M1040 663l8 8M1048 663l-8 8"/>
              <path class="halobox" d="M1102 532h42v16h-42z"/>
              <path class="angico" d="M984 536l-10 5 10 5M982 537q-2 4 0 8M980 536h4v3M980 546h4v-3"/>
              <text class="param" x="991" y="544">Angle Nord du projet</text><text class="param" x="1108" y="544">110.00</text>
            </g>
          </svg>
          <span class="hdl top"></span><span class="hdl bottom"></span><span class="hdl left"></span><span class="hdl right"></span>
        </div>
        <div class="vscroll"><div class="vthumb"></div></div>
      </div>

      <div class="quick">
        <div class="nav">
          <button aria-label="Zoom précédent"><svg><use href="#navback"/></svg></button>
          <button class="faded" aria-label="Zoom suivant"><svg><use href="#navfwd"/></svg></button>
          <button aria-label="Agrandir"><svg><use href="#zoomin"/></svg></button>
        </div>
        <button class="q faded-t"><svg><use href="#zoomfit"/></svg><span>n/d</span><svg class="cv"><use href="#chev-r"/></svg></button>
        <button class="q"><svg><use href="#b-rot"/></svg><span>0.000°</span><svg class="cv"><use href="#chev-r"/></svg></button>
        <button class="q"><svg><use href="#b-scale"/></svg><span>1:100</span><svg class="cv"><use href="#chev-r"/></svg></button>
        <button class="q"><svg><use href="#sheets"/></svg><span>00 - Tous les calques</span><svg class="cv"><use href="#chev-r"/></svg></button>
        <button class="q"><svg><use href="#b-fill"/></svg><span>Modèle entier</span><svg class="cv"><use href="#chev-r"/></svg></button>
        <button class="q"><svg><use href="#pen"/></svg><span>00 - Par outils et mat...</span><svg class="cv"><use href="#chev-r"/></svg></button>
        <button class="q"><svg><use href="#b-frame"/></svg><span>00 - Tout</span><svg class="cv"><use href="#chev-r"/></svg></button>
        <button class="q"><svg><use href="#b-sub"/></svg><span>Pas de substitutions</span><svg class="cv"><use href="#chev-r"/></svg></button>
        <button class="q"><svg><use href="#b-reno"/></svg><span>00 - Afficher tout</span><svg class="cv"><use href="#chev-r"/></svg></button>
        <button class="q"><svg><use href="#b-model"/></svg><span>Modèle principal uniq...</span><svg class="cv"><use href="#chev-r"/></svg></button>
        <button class="q"><svg><use href="#b-dim"/></svg><span>01 - Centimètre</span><svg class="cv"><use href="#chev-r"/></svg></button>
      </div>
    </div>
  </div>

  <div class="status">Saisir extrémité de vecteur nord du projet.</div>
</div>
</body>
</html>
```
FILE: styles.css
```css
* { box-sizing: border-box; }
body {
  margin: 0;
  font: 11px/14px Inter, "Liberation Sans", sans-serif;
  color: #111;
  background: #e8e8e8;
}
button {
  margin: 0;
  padding: 0;
  border: 0;
  background: none;
  font: inherit;
  color: inherit;
}
svg { display: block; flex: none; fill: none; stroke: #222c32; stroke-width: 1.2; }
.defs { position: absolute; width: 0; height: 0; }
.solid { fill: #222c32; stroke: none; }
.fillgray { fill: #8f9193; }
.blue { stroke: #8fb0f5; }
.fillblue { fill: #a5bff5; }
.bluebright { stroke: #3478f6; stroke-width: 1.8; }
.fillbright { fill: #3478f6; stroke: none; }
.orange { stroke: #f57c30; stroke-width: 1.5; }

.app { display: flex; flex-direction: column; height: 100vh; overflow: hidden; }

/* Toolbars */
.bar { display: flex; flex: none; background: #e1e1e1; }
.bar-top { height: 32px; }
.bar-second { height: 38px; border-top: 1px solid #dedede; border-bottom: 1px solid #dedede; padding-left: 559px; }
.seg { display: flex; flex: none; align-items: center; background: #e8e8e8; padding-bottom: 2px; }
.bar-top .seg { padding: 0 4px 5px; }
.seg-attr { margin-left: 30px; width: 414px; padding-left: 1px; }
.seg-snap { margin-left: auto; width: 557px; overflow: hidden; }
.tb {
  flex: none;
  width: 28px;
  height: 28px;
  margin: 0 1px;
  border-radius: 5px;
  display: flex;
  align-items: center;
  justify-content: center;
}
.tb svg { width: 19px; height: 19px; }
.tc {
  flex: none;
  width: 13px;
  height: 28px;
  margin: 0 1px;
  border-radius: 4px;
  display: flex;
  align-items: center;
  justify-content: center;
}
.tc svg { width: 10px; height: 10px; }
.on { background: #b3b4ba; box-shadow: inset 0 0 0 1px #a9aab0, 0 1px 1px #c8c8c8; }
.off { background: #c8c8c8; box-shadow: 0 1px 1px #d4d4d4; }
.dim svg, .off svg, .sm svg { stroke: #8f9193; opacity: .9; }
.sep { flex: none; width: 1px; height: 22px; margin: 0 5px; background: #c9c9c9; }
.sep.short { height: 14px; background: #999; }
.grip { flex: none; width: 1px; height: 14px; margin: 0 5px 0 4px; background: #9a9a9a; }
.lay { height: 30px; border-left: 1px solid #c9c9c9; padding: 0 2px; display: flex; flex-direction: column; justify-content: space-between; color: #7b7b7b; }
.lay:nth-of-type(1) { width: 95px; }
.lay:nth-of-type(2) { width: 96px; }
.lay-h { width: 36px; align-items: center; }
.lay-t { white-space: nowrap; line-height: 13px; }
.lay-r { display: flex; gap: 14px; padding-left: 8px; }
.sm { width: 16px; height: 14px; display: flex; align-items: center; justify-content: center; }
.sm svg { width: 14px; height: 14px; stroke-width: 1.5; }

/* Info box */
.infobox { flex: none; height: 60px; padding: 2px 5px 8px; display: flex; flex-direction: column; justify-content: space-between; font-size: 9px; }
.info-r { display: flex; align-items: flex-end; gap: 2px; }
.ib { width: 40px; height: 18px; border-radius: 4px; background: #fff; box-shadow: 0 0 1px 1px #d6d6d6; display: flex; align-items: center; justify-content: space-between; padding: 0 1px 0 5px; }
.ib-i { width: 18px; height: 14px; }
.ib-on { background: #b3b4ba; justify-content: center; padding: 0; }
.ib-on .ib-i { height: 16px; }
.ib-big { width: 48px; height: 28px; padding-left: 10px; }
.cv { width: 10px; height: 10px; }

/* Toolbox */
.main { flex: 1; min-height: 0; display: flex; border-top: 1px solid #dcdcdc; }
.tools { flex: none; width: 177px; background: #edebec; border-right: 1px solid #dcdcdc; display: flex; flex-direction: column; overflow: hidden; }
.pull { flex: none; width: 69px; height: 1px; margin: 4px 0 2px 51px; background: #999; }
.tool { flex: none; height: 28px; display: flex; align-items: center; gap: 7px; padding-left: 2px; text-align: left; color: #000; white-space: nowrap; }
.tool svg { width: 32px; height: 24px; }
.tool.sel { height: 26px; margin: 1px 1px 1px 0; border-radius: 0 5px 5px 0; background: #b3b4ba; box-shadow: inset 0 0 0 1px #a5a6ac; }
.head { flex: none; height: 20px; margin: 1px 0; padding-left: 2px; border-radius: 0 4px 4px 0; background: #cfcfcf; color: #222; display: flex; align-items: center; gap: 7px; }
.head::before { content: ""; border: 4px solid transparent; border-top: 7px solid #858a8f; border-bottom: 0; }
.docu { flex: 1; min-height: 0; display: flex; }
.docu-l { flex: 1; display: flex; flex-direction: column; }
.track { flex: none; width: 11px; margin: 1px 0 11px; padding: 102px 2px 4px 3px; background: #f8f8f8; display: flex; }
.thumb { flex: 1; border-radius: 3px; background: #7c7c7c; }

/* Work area */
.work { flex: 1; min-width: 0; display: flex; flex-direction: column; }
.tabbar { flex: none; height: 22px; display: flex; background: #dedede; padding-right: 3px; }
.tabgrid { width: 33px; display: flex; align-items: center; justify-content: center; background: #e6e6e6; }
.tabgrid svg { width: 20px; height: 16px; }
.tabs { flex: 1; display: flex; }
.tab { flex: 0 1 300px; display: flex; align-items: center; justify-content: center; gap: 3px; background: #e1e1e1; border-right: 1px solid #a3a3a3; color: #444; white-space: nowrap; }
.tab.cur { background: #fff; border-right: 0; }
.tab svg { width: 19px; height: 19px; }
.tabview { width: 50px; background: #f8f8f8; display: flex; align-items: center; justify-content: center; gap: 6px; }
.vi { width: 22px; height: 16px; }
.ruler-h { width: 100%; height: 13px; background: #fff; border-bottom: 1px solid #dedede; }
.ruler-v { width: 13px; height: 100%; background: #fff; border-right: 1px solid #dedede; }
.ruler-h text, .ruler-v text { font-size: 9px; font-weight: 600; fill: #222; stroke: none; text-anchor: middle; }
.tick { stroke: #000; stroke-width: 3; }
.now { fill: #000; stroke: none; }
.view { flex: 1; min-height: 0; display: flex; background: #fff; }
.canvas { flex: 1; min-width: 0; position: relative; overflow: hidden; }
.plan { width: 100%; height: 100%; }
.plan text { font-family: "Liberation Sans", Arial, sans-serif; stroke: none; fill: #000; }
.faint { stroke: #999; stroke-width: 1; }
.ink { stroke: #000; stroke-width: 1; }
.vec { stroke-width: 2; }
.azure { stroke: #4b9df5; stroke-width: 1; }
.leader { stroke: #666; stroke-width: 1; }
.leader2 { stroke: #888; stroke-width: 2; }
.arrow { fill: #666; stroke: #666; }
.plan .survey text, .plan .deg { font-size: 9px; fill: #f45a0c; stroke: #f45a0c; stroke-width: .2; }
.plan .big { font-size: 18px; }
.plan .north { stroke: #000; stroke-width: .5; }
.plan .bluet { fill: #3f97f2; }
.dash { stroke: #4b9df5; stroke-width: 1; stroke-dasharray: 6 4; }
.inner { stroke-width: 2; }
.node { stroke: #4b9df5; stroke-width: 2; }
.arc { stroke: #666; stroke-width: 1; }
.green { fill: #1d9630; stroke: none; }
.compass { stroke: #444; stroke-width: 2; }
.needle { fill: #444; stroke-width: 1; }
.halo { stroke: #fff; stroke-width: 4; }
.axis { stroke: #444; stroke-width: 1; }
.halobox { fill: #fff; fill-opacity: .7; stroke: none; }
.angico { stroke: #2c55f0; stroke-width: 1; }
.plan .param { font-size: 11px; font-weight: bold; fill: #2c55f0; }
.hdl { position: absolute; background: #f1f1f1; display: flex; align-items: center; justify-content: center; }
.hdl::after { content: ""; }
.top, .bottom { left: 920px; width: 32px; }
.top { top: 1px; height: 16px; border-radius: 0 0 4px 4px; }
.bottom { bottom: 1px; height: 16px; border-radius: 4px 4px 0 0; }
.left, .right { top: 539px; width: 16px; height: 32px; }
.left { left: 1px; border-radius: 0 4px 4px 0; }
.right { right: 0; border-radius: 4px 0 0 4px; }
.top::after, .bottom::after { width: 26px; height: 1px; background: repeating-linear-gradient(90deg, #f39c63 0 5px, transparent 5px 7px); }
.left::after, .right::after { width: 1px; height: 26px; background: repeating-linear-gradient(#f39c63 0 5px, transparent 5px 7px); }
.vscroll { flex: none; width: 3px; background: #fafafa; border-left: 1px solid #dedede; padding-top: 129px; }
.vthumb { height: 24px; background: #d2d2d2; }

/* Quick options */
.quick { flex: none; height: 18px; display: flex; background: #e8e8e8; }
.nav { flex: none; width: 71px; display: flex; justify-content: space-between; padding: 0 6px 0 3px; }
.nav button, .q { display: flex; align-items: center; }
.quick svg { width: 16px; height: 16px; stroke-width: 1.4; }
.quick .cv { width: 10px; height: 10px; stroke-width: 1.2; }
.q { flex: 1 1 0; min-width: 0; border-left: 1px solid #cfcfcf; padding: 0 3px 0 5px; color: #222; }
.q span { flex: 1; text-align: center; white-space: nowrap; overflow: hidden; padding-left: 7px; }
.faded, .faded-t span, .faded-t .cv { opacity: .4; }

.status { flex: none; height: 25px; padding: 2px 3px; border-top: 1px solid #dadada; background: linear-gradient(#e6e6e6, #d0d0d0); color: #222; }
```
